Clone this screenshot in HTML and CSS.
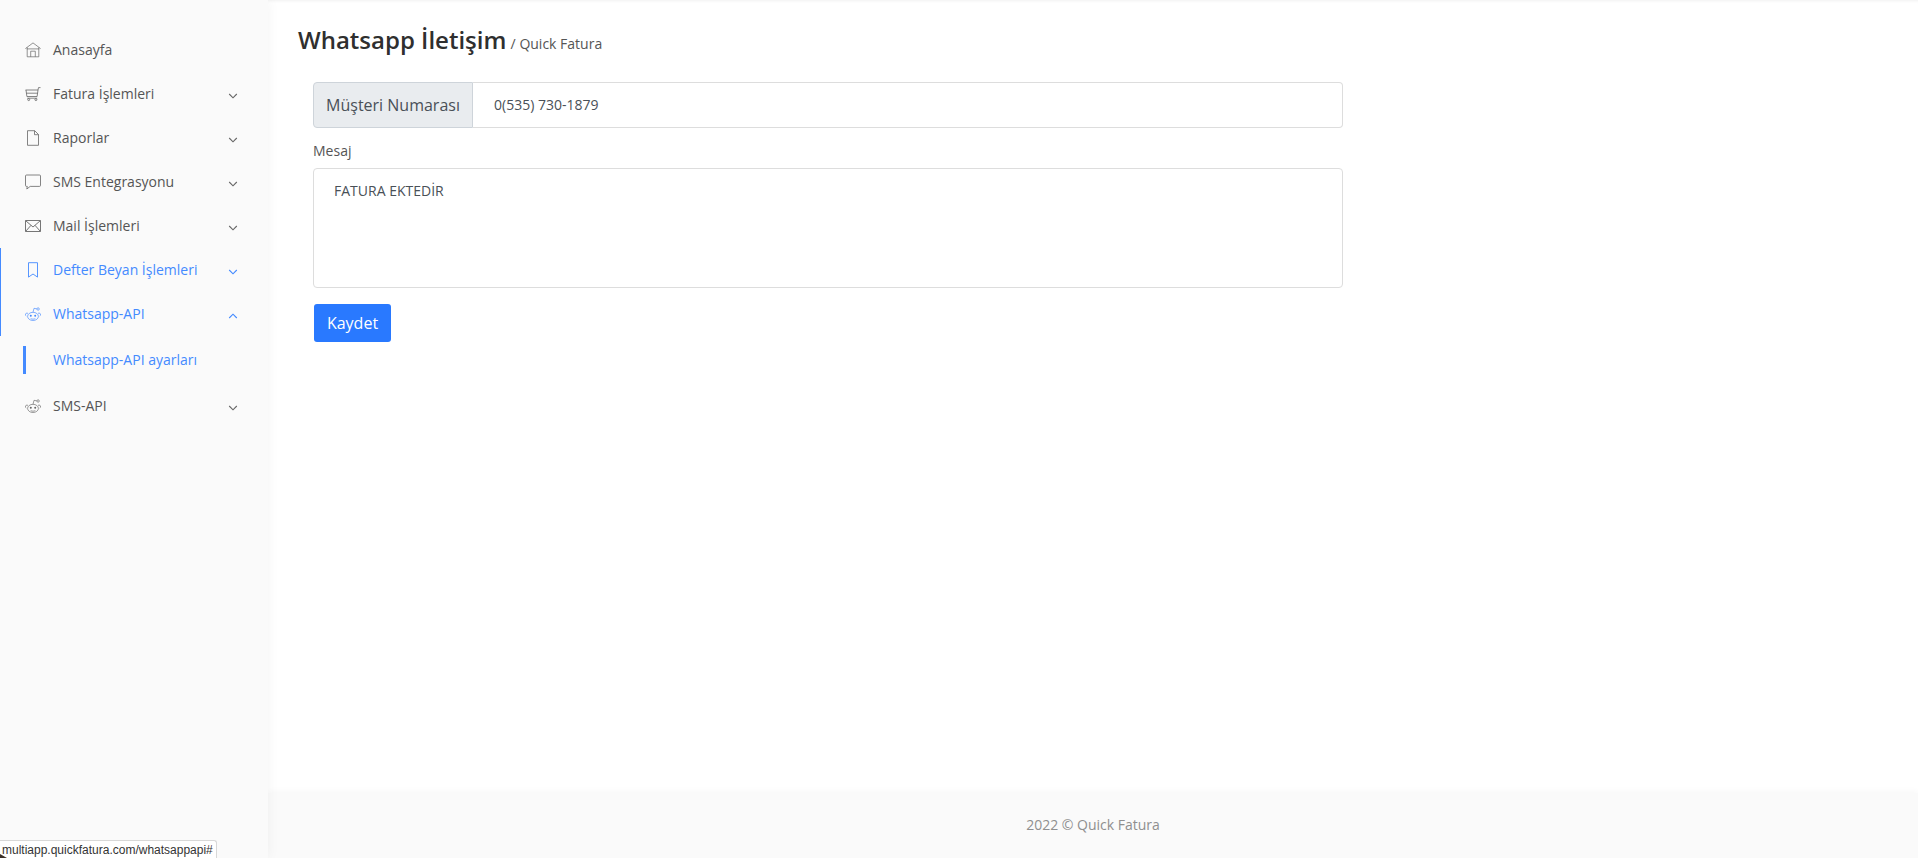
FILE: index.html
```html
<!DOCTYPE html>
<html lang="tr">
<head>
<meta charset="utf-8">
<title>Whatsapp İletişim / Quick Fatura</title>
<link rel="stylesheet" href="styles.css">
</head>
<body>
<svg class="defs" width="0" height="0" aria-hidden="true">
  <symbol id="i-chev-down" viewBox="0 0 10 6"><path d="M1.2 1 5 4.8 8.8 1" fill="none" stroke="currentColor" stroke-width="1.1"/></symbol>
  <symbol id="i-chev-up" viewBox="0 0 10 6"><path d="M1.2 5 5 1.2 8.8 5" fill="none" stroke="currentColor" stroke-width="1.1"/></symbol>
  <symbol id="i-reddit" viewBox="0 0 16 16"><g fill="none" stroke="currentColor" stroke-width=".65"><ellipse cx="8" cy="10.4" rx="5.4" ry="4.1"/><path d="M3.2 7.9a1.5 1.5 0 1 0-1.9 2.1M12.8 7.9a1.5 1.5 0 1 1 1.9 2.1"/><circle cx="13.1" cy="3" r="1.2"/><path d="M8 6.3 9 2.3l2.9.6"/><path d="M5.7 12.5c1.4.9 3.2.9 4.6 0"/></g><circle cx="5.8" cy="9.8" r="1" fill="currentColor"/><circle cx="10.2" cy="9.8" r="1" fill="currentColor"/></symbol>
</svg>
<div class="app">
  <aside class="sidebar">
    <nav class="menu">
      <a class="item" href="#">
        <svg class="icon" viewBox="0 0 16 16"><path d="M.4 6.6 8 .9l7.6 5.7M2.2 5.4v9.4h11.6V5.4M1.8 6.9h12.4M5.7 14.8V9.2h4.6v5.6" fill="none" stroke="currentColor" stroke-width=".7"/></svg>
        <span class="label">Anasayfa</span>
      </a>
      <a class="item" href="#">
        <svg class="icon" viewBox="0 0 16 16"><path d="M.5 4h12.6M1 4l.9 6.5h10.2L13 4l.5-2.4h2M1.4 7.2h11.2M2.2 12.2h10" fill="none" stroke="currentColor" stroke-width=".8"/><circle cx="3.7" cy="13.6" r="1" fill="none" stroke="currentColor" stroke-width=".8"/><circle cx="10.9" cy="13.6" r="1" fill="none" stroke="currentColor" stroke-width=".8"/></svg>
        <span class="label">Fatura İşlemleri</span>
        <svg class="chev"><use href="#i-chev-down"/></svg>
      </a>
      <a class="item" href="#">
        <svg class="icon" viewBox="0 0 16 16"><path d="M2.5.7h7.2l3.8 3.8v10.8h-11zM9.5.7v4h4" fill="none" stroke="currentColor" stroke-width=".8"/></svg>
        <span class="label">Raporlar</span>
        <svg class="chev"><use href="#i-chev-down"/></svg>
      </a>
      <a class="item" href="#">
        <svg class="icon" viewBox="0 0 16 16"><path d="M1.5 1h13a1 1 0 0 1 1 1v9.4a1 1 0 0 1-1 1H5.2L1.8 15l.5-2.6h-.8a1 1 0 0 1-1-1V2a1 1 0 0 1 1-1z" fill="none" stroke="currentColor" stroke-width=".8"/></svg>
        <span class="label">SMS Entegrasyonu</span>
        <svg class="chev"><use href="#i-chev-down"/></svg>
      </a>
      <a class="item" href="#">
        <svg class="icon" viewBox="0 0 16 16"><path d="M.5 2.5h15v11H.5zM.8 2.8 8 9l7.2-6.2M.8 13.2 6 7.3M15.2 13.2 10 7.3" fill="none" stroke="currentColor" stroke-width=".9"/></svg>
        <span class="label">Mail İşlemleri</span>
        <svg class="chev"><use href="#i-chev-down"/></svg>
      </a>
      <div class="active-group">
        <a class="item is-active" href="#">
          <svg class="icon" viewBox="0 0 16 16"><path d="M3.5.7h9v14.4L8 12l-4.5 3.1z" fill="none" stroke="currentColor" stroke-width=".9"/></svg>
          <span class="label">Defter Beyan İşlemleri</span>
          <svg class="chev"><use href="#i-chev-down"/></svg>
        </a>
        <a class="item is-active" href="#">
          <svg class="icon"><use href="#i-reddit"/></svg>
          <span class="label">Whatsapp-API</span>
          <svg class="chev"><use href="#i-chev-up"/></svg>
        </a>
      </div>
      <a class="subitem" href="#">Whatsapp-API ayarları</a>
      <a class="item" href="#">
        <svg class="icon"><use href="#i-reddit"/></svg>
        <span class="label">SMS-API</span>
        <svg class="chev"><use href="#i-chev-down"/></svg>
      </a>
    </nav>
  </aside>
  <div class="main">
    <main class="content">
      <h1 class="title">Whatsapp İletişim <small class="crumb">/ Quick Fatura</small></h1>
      <form class="form">
        <div class="input-group">
          <span class="addon">Müşteri Numarası</span>
          <input class="control" type="text" value="0(535) 730-1879">
        </div>
        <label class="field-label" for="mesaj">Mesaj</label>
        <textarea class="control area" id="mesaj">FATURA EKTEDİR</textarea>
        <button class="btn" type="button">Kaydet</button>
      </form>
    </main>
    <footer class="footer">2022 © Quick Fatura</footer>
  </div>
</div>
<div class="status">multiapp.quickfatura.com/whatsappapi#</div>
</body>
</html>
```

FILE: styles.css
```css
* { box-sizing: border-box; }
html, body { height: 100%; }
body {
  margin: 0;
  overflow: hidden;
  background: #fff;
  color: #555;
  font-family: "Open Sans", "Noto Sans", sans-serif;
  font-size: 14px;
}
.defs { position: absolute; }
a { text-decoration: none; color: inherit; }

.app { display: flex; height: 100vh; }

.sidebar {
  flex: 0 0 268px;
  background: #fafafa;
  padding-top: 28px;
  box-shadow: 0 0 12px rgba(0, 0, 0, .05);
  position: relative;
  z-index: 2;
}
.menu { display: flex; flex-direction: column; }

.item {
  display: flex;
  align-items: center;
  height: 44px;
  padding: 0 30px 0 25px;
  color: #555;
  font-size: 14px;
}
.icon { width: 16px; height: 16px; margin-right: 12px; flex: none; color: #666; }
.label { flex: 1; white-space: nowrap; position: relative; top: -1px; }
.chev { width: 10px; height: 6px; flex: none; color: #666; position: relative; top: 2px; }

.active-group { border-left: 1px solid #448aff; }
.active-group .item { padding-left: 24px; }
.item.is-active, .item.is-active .icon, .item.is-active .chev { color: #448aff; }
.item.is-active .label { font-weight: 500; }

.subitem {
  display: block;
  height: 28px;
  line-height: 28px;
  margin: 10px 0 10px 23px;
  padding-left: 27px;
  border-left: 3px solid #448aff;
  color: #448aff;
  font-weight: 500;
  font-size: 14px;
}

.main { flex: 1; display: flex; flex-direction: column; min-width: 0; }
.content {
  flex: 1;
  padding: 0 0 0 30px;
  box-shadow: inset 0 3px 3px -2px rgba(0, 0, 0, .06);
}
.title {
  margin: 0;
  padding-top: 22px;
  height: 82px;
  font-size: 24px;
  line-height: 36px;
  font-weight: 600;
  color: #2f2f2f;
}
.crumb { font-size: 14px; font-weight: 400; color: #555; margin-left: -2px; }

.form { width: 1030px; margin-left: 15px; display: flex; flex-direction: column; align-items: flex-start; }
.input-group { display: flex; width: 100%; height: 46px; }
.addon {
  flex: 0 0 160px;
  display: flex;
  align-items: center;
  justify-content: center;
  background: #e9ecef;
  border: 1px solid #ced4da;
  border-radius: 4px 0 0 4px;
  font-size: 16px;
  color: #495057;
}
.control {
  display: block;
  font: inherit;
  color: #495057;
  background: #fff;
  border: 1px solid #ddd;
  outline: none;
}
.input-group .control {
  flex: 1;
  min-width: 0;
  border-left: 0;
  border-radius: 0 4px 4px 0;
  padding: 0 20px 2px 21px;
}
.field-label { margin: 13px 0 8px; line-height: 19px; font-size: 14px; color: #555; }
.area {
  width: 100%;
  height: 120px;
  padding: 11px 20px;
  line-height: 21px;
  border-radius: 4px;
  resize: none;
}
.btn {
  margin: 16px 0 0 1px;
  width: 77px;
  height: 38px;
  background: #2979ff;
  color: #fff;
  border: 0;
  border-radius: 3px;
  font: 16px/24px "Open Sans", "Noto Sans", sans-serif;
}

.footer {
  flex: 0 0 65px;
  background: #fafafa;
  padding-top: 22px;
  text-align: center;
  line-height: 19px;
  font-size: 14px;
  color: #8f8f8f;
  box-shadow: 0 -2px 6px rgba(0, 0, 0, .03);
}

.status {
  position: absolute;
  left: 0;
  bottom: 0;
  z-index: 5;
  height: 18px;
  padding: 0 3px 0 2px;
  background: #fff;
  border: 1px solid #d8d8d8;
  border-width: 1px 1px 0 0;
  border-top-right-radius: 3px;
  font: 12px/18px "Liberation Sans", Arial, sans-serif;
  color: #333;
}
.status::before {
  content: "";
  position: absolute;
  left: 0;
  bottom: 0;
  width: 7px;
  height: 4px;
  background: #3a3028;
  clip-path: polygon(0 0, 100% 100%, 0 100%);
}
```
